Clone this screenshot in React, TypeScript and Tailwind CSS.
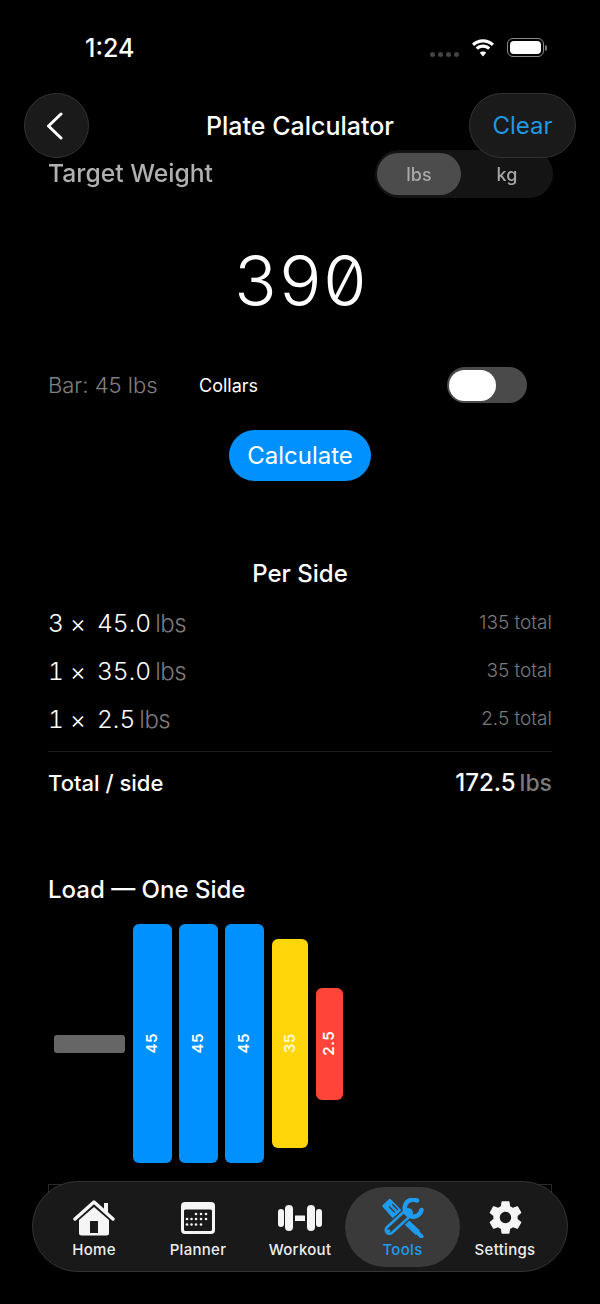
const font = "font-['Inter','Liberation_Sans',sans-serif]";

const HomeIcon = () => (
  <svg viewBox="0 0 42 38" className="w-[42px] h-[38px]" fill="none">
    <path d="M2 20 L21 3 L40 20" stroke="#f5f5f5" strokeWidth="3.4" strokeLinecap="round" strokeLinejoin="round" />
    <path d="M31 4h4v11l-4-3.5z" fill="#f5f5f5" />
    <path fillRule="evenodd" d="M21 8 L36 21 V34 a2.5 2.5 0 0 1-2.5 2.5 H8.500 A2.500 2.500 0 0 1 6 34 V21 Z M17 22 V34 H25 V22 Z" fill="#f5f5f5" />
  </svg>
);

const PlannerIcon = () => (
  <svg viewBox="0 0 36 34" className="w-[36px] h-[34px]" fill="none">
    <rect x="1" y="1" width="34" height="32" rx="4" fill="#f5f5f5" />
    <rect x="4" y="8.500" width="28" height="21.500" rx="1.500" fill="#1a1a1a" />
    {[[16, 13], [21, 13], [26, 13], [7, 18], [11.500, 18], [16, 18], [21, 18], [26, 18], [7, 23.500], [11.500, 23.500], [16, 23.500], [21, 23.500]].map(([x, y]) => (
      <circle key={`${x}-${y}`} cx={x} cy={y} r="1.300" fill="#f5f5f5" />
    ))}
  </svg>
);

const WorkoutIcon = () => (
  <svg viewBox="0 0 44 26" className="w-[44px] h-[26px]" fill="#f5f5f5">
    <rect x="0" y="4" width="6" height="18" rx="3" />
    <rect x="7" y="0" width="8" height="26" rx="4" />
    <rect x="17" y="10.500" width="10" height="5.500" rx="0.500" />
    <rect x="29" y="0" width="8" height="26" rx="4" />
    <rect x="38" y="4" width="6" height="18" rx="3" />
  </svg>
);

const ToolsIcon = () => (
  <svg viewBox="0 0 42 40" className="w-[42px] h-[40px]" fill="none">
    {/* screwdriver */}
    <path d="M16 16 L36 35" stroke="#1f9cf0" strokeWidth="6" />
    <path d="M36 35 L39.500 38.500" stroke="#1f9cf0" strokeWidth="4" strokeLinecap="round" />
    <path d="M8 2 L1.500 8 L13 21 L20 14.500 Z" fill="#1f9cf0" stroke="#1f9cf0" strokeWidth="2.400" strokeLinejoin="round" />
    <path d="M7.500 9 L12.500 14 M10.500 6.500 L15.500 11.500" stroke="#3a3a3a" strokeWidth="1.400" strokeLinecap="round" />
    {/* wrench */}
    <path d="M26 15 L7.500 32" stroke="#3a3a3a" strokeWidth="13" strokeLinecap="round" />
    <path d="M26 15 L7.500 32" stroke="#1f9cf0" strokeWidth="10" strokeLinecap="round" />
    <path d="M24 17 L7.500 32" stroke="#3a3a3a" strokeWidth="5" strokeLinecap="round" />
    <circle cx="6.500" cy="33" r="1.800" fill="#1f9cf0" />
    <path d="M35 2.500 A8.500 8.500 0 1 0 39.500 12" stroke="#1f9cf0" strokeWidth="4.500" strokeLinecap="round" />
  </svg>
);

const GearIcon = () => (
  <svg viewBox="0 0 24 24" className="w-[39px] h-[39px]">
    <path
      fill="#f5f5f5"
      d="M19.430 12.980c.040-.320.070-.640.070-.980s-.030-.660-.070-.980l2.110-1.650c.190-.150.240-.420.120-.640l-2-3.460c-.120-.220-.390-.300-.610-.220l-2.490 1c-.520-.400-1.080-.730-1.690-.980l-.380-2.650A.488.488 0 0 0 14 2h-4c-.250 0-.460.180-.490.420l-.380 2.650c-.610.250-1.170.590-1.690.980l-2.490-1a.566.566 0 0 0-.180-.030c-.170 0-.340.090-.430.250l-2 3.460c-.130.220-.070.490.120.640l2.110 1.650c-.040.320-.070.650-.070.980s.030.660.070.980l-2.110 1.650c-.190.150-.240.420-.120.640l2 3.460c.120.220.390.300.610.220l2.490-1c.520.400 1.080.730 1.690.980l.380 2.650c.030.240.240.420.490.420h4c.250 0 .460-.180.490-.420l.380-2.650c.610-.250 1.170-.590 1.690-.980l2.490 1c.060.020.120.030.180.030.170 0 .340-.090.430-.250l2-3.460c.120-.220.070-.490-.120-.640l-2.110-1.650zM12 15.500c-1.930 0-3.500-1.570-3.500-3.500s1.570-3.500 3.500-3.500 3.500 1.570 3.500 3.500-1.570 3.500-3.500 3.500z"
    />
  </svg>
);

const rows = [
  { count: "3", weight: "45.0", total: "135 total" },
  { count: "1", weight: "35.0", total: "35 total" },
  { count: "1", weight: "2.5", total: "2.5 total" },
];

const plates = [
  { label: "45", cls: "w-[39px] h-[239px] mr-[7px] bg-[#0091ff] text-white" },
  { label: "45", cls: "w-[39px] h-[239px] mr-[7px] bg-[#0091ff] text-white" },
  { label: "45", cls: "w-[39px] h-[239px] mr-[8px] bg-[#0091ff] text-white" },
  { label: "35", cls: "w-[36px] h-[209px] mr-[8px] bg-[#ffd60a] text-[#fff8d0]" },
  { label: "2.5", cls: "w-[27px] h-[112px] bg-[#ff453a] text-white" },
];

const tabs = [
  { label: "Home", icon: <HomeIcon />, width: "w-[94px]" },
  { label: "Planner", icon: <PlannerIcon />, width: "w-[114px]" },
  { label: "Workout", icon: <WorkoutIcon />, width: "w-[90px]" },
  { label: "Tools", icon: <ToolsIcon />, width: "w-[115px]", active: true },
  { label: "Settings", icon: <GearIcon />, width: "w-[90px]" },
];

export default function App() {
  return (
    <div className={`relative w-[600px] h-[1304px] overflow-hidden bg-black text-white ${font}`}>
      {/* status bar */}
      <div className="flex items-center justify-between pt-[33px] pl-[85px] pr-[53px] h-[62px]">
        <span className="text-[25px] leading-[30px] font-medium">1:24</span>
        <div className="flex items-center gap-[12px]">
          <div className="flex gap-[3px] mt-[14px]">
            <span className="size-[5px] rounded-full bg-[#444]" />
            <span className="size-[5px] rounded-full bg-[#444]" />
            <span className="size-[5px] rounded-full bg-[#444]" />
            <span className="size-[5px] rounded-full bg-[#444]" />
          </div>
          <svg viewBox="0 0 24 18" className="w-[24px] h-[18px] mt-[1px]" fill="white">
            <path d="M12 3.500c3.400 0 6.500 1.300 8.800 3.500L23 4.700C20.100 1.900 16.200.2 12 .2S3.900 1.900 1 4.700L3.200 7C5.500 4.800 8.600 3.500 12 3.500z" />
            <path d="M12 8.700c2 0 3.800.8 5.100 2l2.200-2.300C17.400 6.600 14.800 5.500 12 5.500S6.600 6.600 4.700 8.400l2.200 2.300c1.300-1.200 3.100-2 5.100-2z" />
            <path d="M12 12.500c-1.300 0-2.400.5-3.200 1.300L12 17.500l3.200-3.700c-.8-.8-1.900-1.300-3.200-1.300z" />
          </svg>
          <div className="flex items-center">
            <div className="w-[37px] h-[19px] rounded-[6px] border border-[#8a8a8a] p-[2px]">
              <div className="w-full h-full rounded-[4px] bg-white" />
            </div>
            <div className="ml-[1px] w-[2px] h-[6px] rounded-r-[2px] bg-[#7a7a7a]" />
          </div>
        </div>
      </div>

      {/* nav */}
      <div className="relative z-10 grid grid-cols-[1fr_auto_1fr] items-center mt-[31px] px-[24px]">
        <button className="flex items-center justify-center size-[65px] rounded-full bg-[#1a1a1a] border border-[#333]">
          <svg viewBox="0 0 17 28" className="w-[17px] h-[28px] -ml-[4px]" fill="none">
            <path d="M15 2 L2.500 14 L15 26" stroke="white" strokeWidth="3" strokeLinecap="round" strokeLinejoin="round" />
          </svg>
        </button>
        <h1 className="text-[25px] leading-[30px] font-medium">Plate Calculator</h1>
        <button className="justify-self-end flex items-center justify-center w-[107px] h-[65px] rounded-full bg-[#1a1a1a] border border-[#333] text-[24px] text-[#2196e3]">
          Clear
        </button>
      </div>

      {/* target weight */}
      <div className="px-[48px]">
        <div className="flex items-center justify-between -mt-[8px] h-[48px]">
          <span className="text-[24.700px] font-medium text-[#b0b0b0] blur-[0.6px]">Target Weight</span>
          <div className="flex items-center w-[178px] h-[48px] rounded-full bg-[#141414] pl-[2px] -mr-[1px] blur-[0.5px]">
            <div className="flex items-center justify-center w-[84px] h-[42px] rounded-full bg-[#4c4c4c] text-[18px] font-medium text-[#a8a8a8]">lbs</div>
            <div className="flex-1 text-center text-[18px] font-medium text-[#a8a8a8]">kg</div>
          </div>
        </div>

        <div className="flex justify-center mt-[43px] text-[70px] leading-[80px] font-light tabular-nums slashed-zero tracking-[-1px]">
          390
        </div>

        <div className="flex items-center mt-[46px] h-[36px]">
          <span className="w-[151px] text-[22px] text-[#808080] font-light">Bar: 45 lbs</span>
          <span className="text-[18px]">Collars</span>
          <div className="ml-auto mr-[25px] flex items-center w-[80px] h-[36px] rounded-full bg-[#4a4a4a] p-[2px]">
            <div className="w-[47px] h-[31px] rounded-full bg-white" />
          </div>
        </div>

        <div className="flex justify-center mt-[27px]">
          <button className="w-[142px] h-[51px] rounded-full bg-[#0091ff] text-[24px] font-normal">Calculate</button>
        </div>

        <h2 className="mt-[78px] text-center text-[24px] leading-[30px] font-medium">Per Side</h2>

        <div className="mt-[17px] flex flex-col gap-[14px]">
          {rows.map((r) => (
            <div key={r.weight} className="flex items-center justify-between h-[34px]">
              <div className="flex items-baseline text-[24.500px] leading-[32px] font-light tabular-nums">
                <span className="w-[22px]">{r.count}</span>
                <span className="w-[27px]">×</span>
                <span>{r.weight}</span>
                <span className="ml-[4px] text-[24px] leading-[32px] tracking-[-0.5px] text-[#7a7a7a]">lbs</span>
              </div>
              <span className="text-[19px] leading-[32px] font-light text-[#7a7a7a]">{r.total}</span>
            </div>
          ))}
        </div>

        <div className="mt-[15px] border-t border-[#1c1c1c] pt-[13px] flex items-baseline justify-between">
          <span className="text-[22px] font-medium">Total / side</span>
          <span className="text-[24px] font-medium">
            172.5<span className="ml-[4px] text-[23px] text-[#7a7a7a]">lbs</span>
          </span>
        </div>

        <h2 className="mt-[74px] text-[24px] leading-[30px] font-medium">Load — One Side</h2>

        <div className="mt-[19px] flex items-center h-[239px] pl-[6px]">
          <div className="w-[71px] h-[18px] rounded-[3px] bg-[#666] mr-[8px]" />
          <div className="flex items-center">
            {plates.map((p, i) => (
              <div key={i} className={`flex items-center justify-center rounded-[6px] ${p.cls}`}>
                <span className="-rotate-90 text-[15px] font-semibold tracking-[0.5px]">{p.label}</span>
              </div>
            ))}
          </div>
        </div>

        {/* next card peeking out behind the tab bar */}
        <div className="mt-[21px] h-[8px] border-x border-t border-[#2a2a2a]" />
      </div>

      {/* tab bar */}
      <div className="absolute left-[32px] top-[1181px] w-[536px] h-[91px] rounded-full bg-[#191919] border border-[#333] flex items-center pl-[14px]">
        {tabs.map((t) => (
          <div
            key={t.label}
            className={`flex flex-col items-center justify-end h-[80px] pb-[7px] rounded-full ${t.width} ${t.active ? "bg-[#3a3a3a] text-[#1f9cf0]" : "text-[#eeeeee]"}`}
          >
            <div className="flex items-center justify-center h-[44px]">{t.icon}</div>
            <span className="text-[15px] leading-[20px] font-medium tracking-[0.3px]">{t.label}</span>
          </div>
        ))}
      </div>
    </div>
  );
}
